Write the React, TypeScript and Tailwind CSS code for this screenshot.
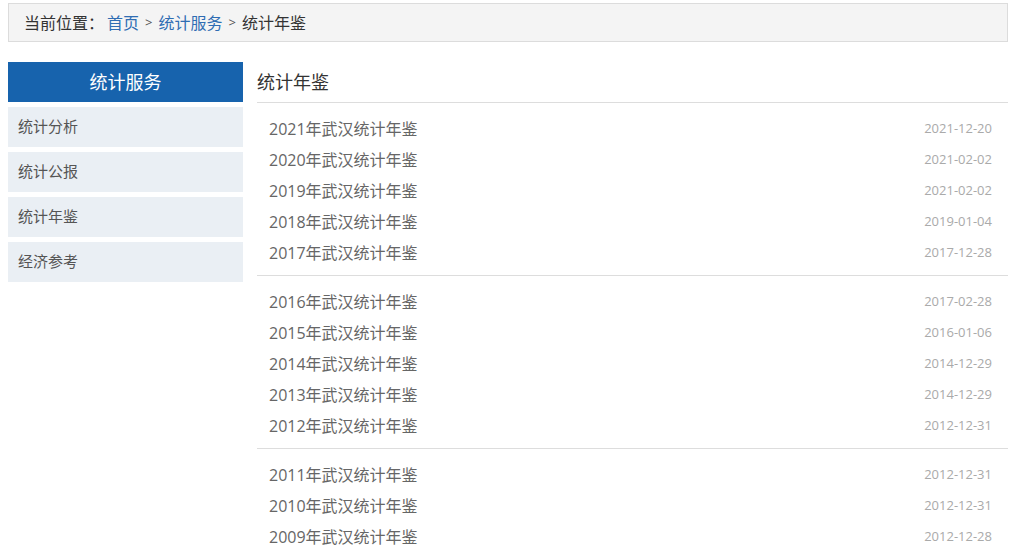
import React from 'react';

const groups: { title: string; date: string }[][] = [
  [
    { title: '2021年武汉统计年鉴', date: '2021-12-20' },
    { title: '2020年武汉统计年鉴', date: '2021-02-02' },
    { title: '2019年武汉统计年鉴', date: '2021-02-02' },
    { title: '2018年武汉统计年鉴', date: '2019-01-04' },
    { title: '2017年武汉统计年鉴', date: '2017-12-28' },
  ],
  [
    { title: '2016年武汉统计年鉴', date: '2017-02-28' },
    { title: '2015年武汉统计年鉴', date: '2016-01-06' },
    { title: '2014年武汉统计年鉴', date: '2014-12-29' },
    { title: '2013年武汉统计年鉴', date: '2014-12-29' },
    { title: '2012年武汉统计年鉴', date: '2012-12-31' },
  ],
  [
    { title: '2011年武汉统计年鉴', date: '2012-12-31' },
    { title: '2010年武汉统计年鉴', date: '2012-12-31' },
    { title: '2009年武汉统计年鉴', date: '2012-12-28' },
  ],
];

const menu = ['统计分析', '统计公报', '统计年鉴', '经济参考'];

export default function App() {
  return (
    <div className="w-[1012px] h-[560px] overflow-hidden bg-white font-['Open_Sans','Noto_Sans_CJK_SC',sans-serif]">
      <div className="w-[1000px] ml-[8px]">
        {/* Breadcrumb */}
        <div className="mt-[3px] h-[39px] border border-[#dcdcdc] bg-[#f4f4f4] flex items-center pl-[15px] text-[16px] text-[#333]">
          <span>当前位置：</span>
          <a className="ml-[3px] text-[#2f6db3]">首页</a>
          <span className="mx-[6px] text-[13px] text-[#555]">&gt;</span>
          <a className="text-[#2f6db3]">统计服务</a>
          <span className="mx-[6px] text-[13px] text-[#555]">&gt;</span>
          <span>统计年鉴</span>
        </div>

        <div className="flex mt-[20px] gap-[14px]">
          {/* Sidebar */}
          <div className="w-[235px] shrink-0">
            <div className="h-[40px] bg-[#1763ad] text-white text-[18px] flex items-center justify-center">
              统计服务
            </div>
            <div className="flex flex-col gap-[5px] mt-[5px]">
              {menu.map((m) => (
                <div key={m} className="h-[40px] bg-[#eaeff4] flex items-center pl-[10px] pb-[2px] text-[15px] text-[#555]">
                  {m}
                </div>
              ))}
            </div>
          </div>

          {/* Main */}
          <div className="flex-1">
            <div className="h-[41px] flex items-center text-[18px] text-[#333] border-b border-[#dddddd]">
              统计年鉴
            </div>
            {groups.map((g, i) => (
              <ul
                key={i}
                className={i < groups.length - 1 ? 'pt-[10px] pb-[7px] border-b border-[#dddddd]' : 'pt-[10px] pb-[7px]'}
              >
                {g.map((r) => (
                  <li key={r.title} className="h-[31px] flex items-center justify-between pl-[12px] pr-[16px]">
                    <span className="text-[16px] text-[#666]">{r.title}</span>
                    <span className="text-[13px] text-[#aaa]">{r.date}</span>
                  </li>
                ))}
              </ul>
            ))}
          </div>
        </div>
      </div>
    </div>
  );
}
